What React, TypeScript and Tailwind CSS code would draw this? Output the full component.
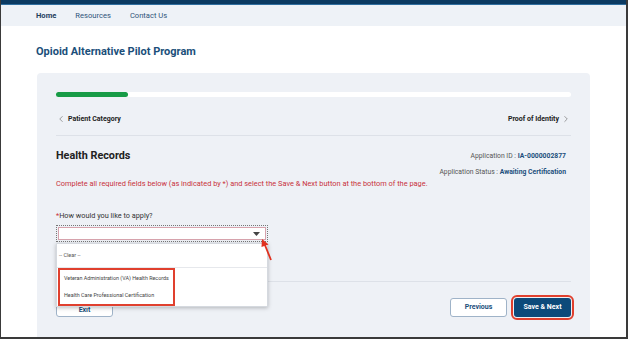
import { ChevronLeft, ChevronRight } from "lucide-react";

const navItems = ["Home", "Resources", "Contact Us"];

function RedArrow() {
  return (
    <svg
      className="absolute left-[258px] top-[238px]"
      width="16"
      height="24"
      viewBox="0 0 16 24"
    >
      <line x1="12" y1="22" x2="5.5" y2="6" stroke="#e0301e" strokeWidth="1.8" />
      <polygon points="3,1 9.5,6.5 2.5,9" fill="#e0301e" />
    </svg>
  );
}

function Dropdown() {
  return (
    <div className="absolute left-[55px] top-[243px] w-[212px] h-[64px] bg-white shadow-[0_1px_4px_rgba(0,0,0,0.25)] border border-[#d5d9df]">
      <div className="h-[24px] flex items-center pl-[2px] text-[5.5px] text-[#555] border-b border-[#e6e8ec]">
        -- Clear --
      </div>
      <div className="ml-[1px] w-[117px] h-[38px] border-2 border-[#e0402e] flex flex-col justify-around pl-[4px] text-[5.4px] text-[#444]">
        <span>Veteran Administration (VA) Health Records</span>
        <span>Health Care Professional Certification</span>
      </div>
    </div>
  );
}

export default function App() {
  return (
    <div
      className="relative w-[628px] h-[339px] overflow-hidden bg-white border-l border-r-2 border-b-2 border-[#3a3a3a]"
      style={{ fontFamily: "Roboto, 'Liberation Sans', sans-serif" }}
    >
      <div className="h-[5px] bg-[#0b3a62] border-b border-[#2f6e9f]" />
      <nav className="h-[21px] bg-[#eef2f7] flex items-center gap-[19px] pl-[35px] pt-px text-[7.6px] text-[#2f557a]">
        {navItems.map((item, i) => (
          <span key={item} className={i === 0 ? "font-bold text-[#1f3f60]" : ""}>
            {item}
          </span>
        ))}
      </nav>

      <h1 className="pl-[35px] mt-[19px] text-[11px] font-bold text-[#1b4f7a] leading-[14px]">
        Opioid Alternative Pilot Program
      </h1>

      <section className="ml-[36px] mt-[14px] w-[553px] h-[280px] bg-[#eef1f6] rounded-[4px] px-[19px] pt-[19px]">
        <div className="h-[5px] bg-white rounded-full">
          <div className="h-full w-[72px] bg-[#179b46] rounded-full" />
        </div>

        <div className="mt-[15px] h-[14px] flex items-center justify-between text-[7px] font-bold text-[#222]">
          <div className="flex items-center gap-[2px]">
            <ChevronLeft size={10} strokeWidth={1.5} className="text-[#666]" />
            <span>Patient Category</span>
          </div>
          <div className="flex items-center gap-[2px]">
            <span>Proof of Identity</span>
            <ChevronRight size={10} strokeWidth={1.5} className="text-[#666]" />
          </div>
        </div>

        <div className="mt-[9px] h-px bg-[#dde1e8]" />

        <div className="mt-[12px] flex justify-between">
          <h2 className="text-[10.8px] font-bold text-[#222] leading-[16px]">
            Health Records
          </h2>
          <div className="flex flex-col items-end pr-[5px] text-[6.8px] text-[#555] leading-[16px]">
            <span>
              Application ID : <b className="text-[#1b4f7c]">IA-0000002877</b>
            </span>
            <span>
              Application Status : <b className="text-[#1b4f7c]">Awaiting Certification</b>
            </span>
          </div>
        </div>

        <p className="-mt-[1px] text-[7.4px] text-[#c8323c] leading-[10px]">
          Complete all required fields below (as indicated by *) and select the Save &amp; Next button at the bottom of the page.
        </p>

        <label className="block mt-[22px] text-[7.3px] text-[#333] leading-[10px]">
          <span className="text-[#c8323c]">*</span>How would you like to apply?
        </label>

        <div className="mt-[4px] w-[212px] h-[17px] border border-dotted border-[#777] p-px">
          <div className="h-full bg-white border border-[#d7a3ad] flex items-center justify-end pr-[5px]">
            <svg width="7" height="4" viewBox="0 0 7 4">
              <polygon points="0,0 7,0 3.5,4" fill="#444" />
            </svg>
          </div>
        </div>

        <div className="mt-[39px] h-px bg-[#dde1e8]" />

        <div className="mt-[16px] flex justify-between items-center">
          <button className="w-[57px] h-[19px] bg-white border border-[#9fb3c8] rounded-[3px] text-[7px] font-bold text-[#1b4f7c] pt-[6px]">
            Exit
          </button>
          <div className="flex gap-[7px]">
            <button className="w-[57px] h-[19px] bg-white border border-[#9fb3c8] rounded-[3px] text-[7px] font-bold text-[#1b4f7c]">
              Previous
            </button>
            <button className="w-[57px] h-[19px] bg-[#0d4a7a] rounded-[3px] text-[7px] font-bold text-white outline-2 outline-offset-[1px] outline-[#e0402e]">
              Save &amp; Next
            </button>
          </div>
        </div>
      </section>

      <Dropdown />
      <RedArrow />
    </div>
  );
}
